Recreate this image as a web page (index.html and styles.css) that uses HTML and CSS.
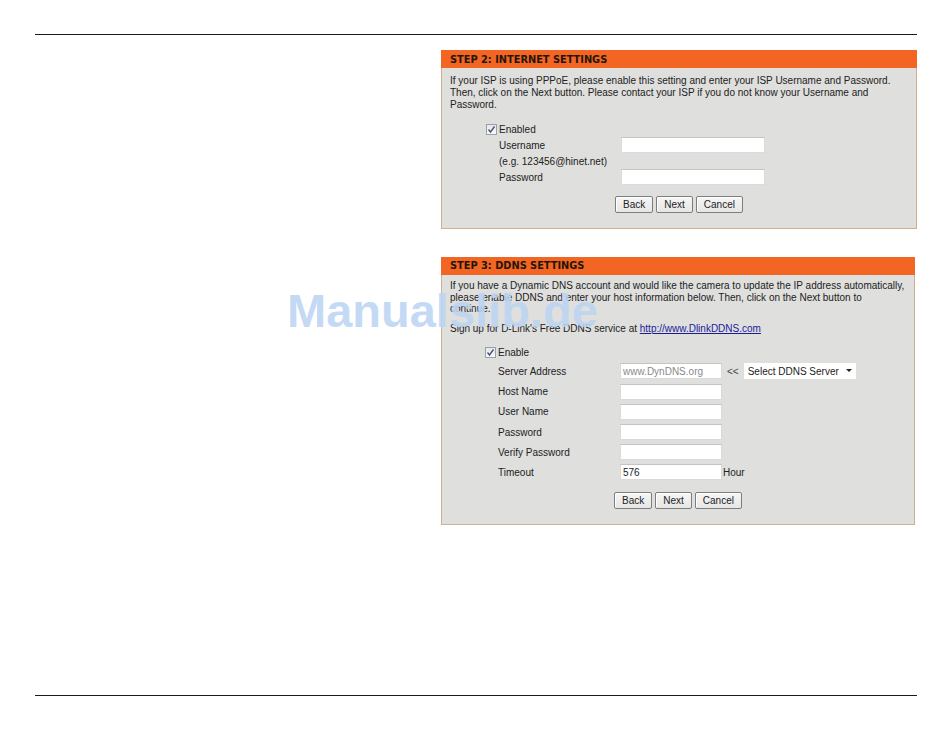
FILE: index.html
```html
<!DOCTYPE html>
<html lang="en">
<head>
    <meta charset="UTF-8">
    <meta name="viewport" content="width=device-width, initial-scale=1.0">
    <title>Setup Wizard</title>
    <link rel="stylesheet" href="styles.css">
</head>
<body>
    <div class="page">
        <div class="rule"></div>
        <div class="content">
            <div class="steps">
                <section class="panel step2">
                    <h2 class="panel-title">STEP 2: INTERNET SETTINGS</h2>
                    <div class="panel-body">
                        <p class="panel-text">If your ISP is using PPPoE, please enable this setting and enter your ISP Username and Password.<br>Then, click on the Next button. Please contact your ISP if you do not know your Username and<br>Password.</p>
                        <div class="form">
                            <div class="check-row">
                                <span class="check"><svg width="9" height="9" viewBox="0 0 9 9"><path d="M1.5 4.5 L3.5 7 L7.5 1.5" fill="none" stroke="#4b5670" stroke-width="1.4"/></svg></span>
                                Enabled
                            </div>
                            <div class="row"><span class="label">Username</span><input class="text wide" type="text"></div>
                            <div class="row"><span class="label">(e.g. 123456@hinet.net)</span></div>
                            <div class="row"><span class="label">Password</span><input class="text wide" type="password"></div>
                        </div>
                        <div class="buttons">
                            <button class="btn">Back</button>
                            <button class="btn">Next</button>
                            <button class="btn">Cancel</button>
                        </div>
                    </div>
                </section>

                <section class="panel step3">
                    <h2 class="panel-title">STEP 3: DDNS SETTINGS</h2>
                    <div class="panel-body">
                        <p class="panel-text">If you have a Dynamic DNS account and would like the camera to update the IP address automatically,<br>please enable DDNS and enter your host information below. Then, click on the Next button to<br>continue.</p>
                        <p class="panel-text signup">Sign up for D-Link's Free DDNS service at <a href="#">http://www.DlinkDDNS.com</a></p>
                        <div class="form">
                            <div class="check-row">
                                <span class="check"><svg width="9" height="9" viewBox="0 0 9 9"><path d="M1.5 4.5 L3.5 7 L7.5 1.5" fill="none" stroke="#4b5670" stroke-width="1.4"/></svg></span>
                                Enable
                            </div>
                            <div class="row">
                                <span class="label">Server Address</span>
                                <input class="text grey" type="text" value="www.DynDNS.org">
                                <span class="arrows">&lt;&lt;</span>
                                <div class="select">
                                    Select DDNS Server
                                    <svg width="6" height="4" viewBox="0 0 6 4"><path d="M0 0 H6 L3 3 Z" fill="#222"/></svg>
                                </div>
                            </div>
                            <div class="row"><span class="label">Host Name</span><input class="text" type="text"></div>
                            <div class="row"><span class="label">User Name</span><input class="text" type="text"></div>
                            <div class="row"><span class="label">Password</span><input class="text" type="password"></div>
                            <div class="row"><span class="label">Verify Password</span><input class="text" type="password"></div>
                            <div class="row"><span class="label">Timeout</span><input class="text" type="text" value="576"><span class="unit">Hour</span></div>
                        </div>
                        <div class="buttons">
                            <button class="btn">Back</button>
                            <button class="btn">Next</button>
                            <button class="btn">Cancel</button>
                        </div>
                    </div>
                </section>
            </div>
        </div>
        <div class="rule rule-bottom"></div>
    </div>
    <div class="watermark">Manualslib.de</div>
</body>
</html>
```

FILE: styles.css
```css
* {
    margin: 0;
    padding: 0;
    box-sizing: border-box;
}

body {
    font-family: "Liberation Sans", Arial, sans-serif;
    font-size: 10px;
    color: #222;
    background: #fff;
}

.page {
    height: 696px;
    padding: 34px 33px 0 35px;
    display: flex;
    flex-direction: column;
}

.rule {
    height: 1px;
    background-color: #1b1b1b;
}

.rule-bottom {
    margin-top: auto;
}

.content {
    display: flex;
    justify-content: flex-end;
    padding-top: 15px;
}

.steps {
    width: 476px;
    display: flex;
    flex-direction: column;
    align-items: flex-start;
    gap: 28px;
}

.panel {
    width: 476px;
}

.panel.step3 {
    width: 474px;
}

.panel-title {
    height: 18px;
    line-height: 19px;
    padding-left: 9px;
    background-color: #f26522;
    color: #24150b;
    font-family: "DejaVu Sans", Verdana, sans-serif;
    font-size: 9.8px;
    font-weight: bold;
}

.step3 .panel-title {
    line-height: 17px;
}

.panel-body {
    background-color: #dfdfdd;
    border: 1px solid #cdb08f;
    border-top: none;
    padding-bottom: 15px;
}

.panel-text {
    padding: 7px 8px 0;
    line-height: 12px;
    white-space: nowrap;
}

.step3 .panel-text {
    padding-top: 5px;
    line-height: 11.6px;
}

.step3 .panel-text.signup {
    padding-top: 8px;
}

.panel-text a {
    color: #1b1b9a;
}

.form {
    margin: 10px 0 0 44px;
}

.step3 .form {
    margin: 9px 0 0 43px;
}

.check-row {
    display: flex;
    align-items: center;
    height: 16px;
}

.step3 .check-row {
    height: 18px;
}

.check {
    width: 11px;
    height: 11px;
    margin-right: 2px;
    display: flex;
    justify-content: center;
    align-items: center;
    border: 1px solid #9aa0a8;
    background: linear-gradient(#e4e6ea, #fafafa);
}

.row {
    display: flex;
    align-items: center;
    height: 16px;
    padding-left: 13px;
}

.step3 .row {
    height: 20.2px;
}

.label {
    width: 122px;
    flex: none;
    white-space: nowrap;
}

.text {
    width: 102px;
    height: 16px;
    padding: 0 2px;
    border: 1px solid #dadada;
    border-top-color: #c4c4c4;
    background-color: #fff;
    font-family: "Liberation Sans", Arial, sans-serif;
    font-size: 10px;
    color: #222;
    outline: none;
}

.text.wide {
    width: 144px;
}

.text.grey {
    color: #8a8a8a;
}

.arrows {
    margin: 0 5px;
    color: #444;
}

.unit {
    margin-left: 1px;
}

.select {
    width: 112px;
    height: 16px;
    padding: 0 4px;
    display: flex;
    justify-content: space-between;
    align-items: center;
    background-color: #fff;
}

.buttons {
    display: flex;
    justify-content: center;
    gap: 3px;
    margin-top: 11px;
}

.step3 .buttons {
    margin-top: 9px;
}

.btn {
    height: 17px;
    padding: 0 7px;
    font-family: "Liberation Sans", Arial, sans-serif;
    font-size: 10px;
    color: #222;
    background: linear-gradient(#f6f6f6, #e6e6e6);
    border: 1px solid #7d7d7d;
    border-radius: 2px;
    box-shadow: inset 1px 1px #fff;
}

.watermark {
    position: absolute;
    left: 287px;
    top: 287px;
    font-family: "Liberation Sans", Arial, sans-serif;
    font-size: 47px;
    font-weight: bold;
    line-height: 1;
    color: rgba(188, 213, 243, 0.88);
    pointer-events: none;
}
```
